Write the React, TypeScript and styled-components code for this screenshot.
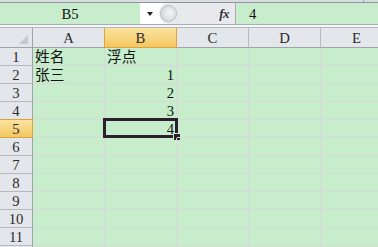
import styled, { createGlobalStyle } from 'styled-components';

const GlobalStyle = createGlobalStyle`
  html, body {
    margin: 0;
    padding: 0;
    overflow: hidden;
    background: #f2f3f5;
  }
`;

const COLUMNS = ['A', 'B', 'C', 'D', 'E'];
const ROW_COUNT = 12;

const data: Record<string, { value: string; align?: 'left' | 'right' }> = {
  A1: { value: '姓名' },
  B1: { value: '浮点' },
  A2: { value: '张三' },
  B2: { value: '1', align: 'right' },
  B3: { value: '2', align: 'right' },
  B4: { value: '3', align: 'right' },
  B5: { value: '4', align: 'right' },
};

const activeCol = 'B';
const activeRow = 5;

const App = () => {
  const rows = Array.from({ length: ROW_COUNT }, (_, i) => i + 1);

  return (
    <Window>
      <GlobalStyle />
      <TopStrip>
        <StripDivider />
      </TopStrip>
      <FormulaBar>
        <NameBox>B5</NameBox>
        <DropButton>
          <Arrow />
        </DropButton>
        <FxPanel>
          <Knob />
          <FxLabel>fx</FxLabel>
        </FxPanel>
        <FormulaInput>4</FormulaInput>
      </FormulaBar>
      <Gap />
      <Sheet>
        <Corner>
          <CornerMark />
        </Corner>
        {COLUMNS.map((col) => (
          <ColHeader key={col} $active={col === activeCol}>
            {col}
          </ColHeader>
        ))}
        {rows.map((row) => (
          <Row key={row} row={row} />
        ))}
      </Sheet>
    </Window>
  );
};

// last row only peeks in at the bottom edge, so its label is left out
const Row = ({ row }: { row: number }) => (
  <>
    <RowHeader $active={row === activeRow}>{row < ROW_COUNT ? row : ''}</RowHeader>
    {COLUMNS.map((col) => {
      const ref = `${col}${row}`;
      const cell = data[ref];
      const selected = col === activeCol && row === activeRow;
      return (
        <Cell key={ref} $align={cell?.align ?? 'left'}>
          {cell?.value}
          {selected && (
            <Selection>
              <FillHandle />
            </Selection>
          )}
        </Cell>
      );
    })}
  </>
);

const Window = styled.div`
  width: 378px;
  height: 247px;
  overflow: hidden;
  background: #f2f3f5;
  font-family: 'Liberation Serif', 'Noto Sans CJK SC', serif;
  font-size: 14.7px;
  color: #111;
`;

const TopStrip = styled.div`
  height: 2px;
  background: #d9dde2;
  border-bottom: 1px solid #8f959c;
  display: flex;
`;

const StripDivider = styled.div`
  margin-left: 363px;
  width: 1px;
  background: #9aa0a6;
`;

const FormulaBar = styled.div`
  display: flex;
  height: 21px;
  border-bottom: 1px solid #a8adb3;
`;

const NameBox = styled.div`
  width: 140px;
  background: #c7edcc;
  display: flex;
  align-items: center;
  justify-content: center;
  padding-top: 1px;
`;

const DropButton = styled.div`
  width: 19px;
  background: #fff;
  display: flex;
  align-items: center;
  justify-content: center;
  padding-right: 4px;
`;

const Arrow = styled.div`
  width: 0;
  height: 0;
  border-left: 3.5px solid transparent;
  border-right: 3.5px solid transparent;
  border-top: 4px solid #222;
  margin-top: 1px;
`;

const FxPanel = styled.div`
  width: 76px;
  margin-left: -4px;
  display: flex;
  align-items: center;
  background: #e7e9ec;
  border-right: 1px solid #a9adb3;
  border-radius: 11px 0 0 11px;
`;

const Knob = styled.div`
  width: 17px;
  height: 17px;
  margin-left: 1px;
  border-radius: 50%;
  box-sizing: border-box;
  border: 1px solid #b9bdc3;
  background: radial-gradient(circle at 60% 45%, #f4f5f7 0%, #d9dce0 60%, #c9cdd2 100%);
`;

const FxLabel = styled.div`
  margin-left: auto;
  margin-right: 6px;
  font-family: 'Liberation Serif', serif;
  font-style: italic;
  font-weight: bold;
  font-size: 13px;
  color: #333;
  letter-spacing: -0.5px;
`;

const FormulaInput = styled.div`
  flex: 1;
  background: #c7edcc;
  display: flex;
  align-items: center;
  padding-left: 13px;
  padding-top: 1px;
`;

const Gap = styled.div`
  height: 2px;
  background: #f4f5f7;
`;

const Sheet = styled.div`
  display: grid;
  grid-template-columns: 33px repeat(5, 72px);
  grid-template-rows: 20px;
  grid-auto-rows: 18px;
  border-top: 1px solid #b4b8bd;
  background: #c7edcc;
`;

const HeaderBase = styled.div`
  box-sizing: border-box;
  background: #e3e6ea;
  color: #2b2b2b;
  display: flex;
  align-items: center;
  justify-content: center;
`;

const Corner = styled(HeaderBase)`
  position: relative;
  border-right: 1px solid #9fa4aa;
  border-bottom: 1px solid #9fa4aa;
`;

const CornerMark = styled.div`
  position: absolute;
  right: 4px;
  bottom: 3px;
  width: 0;
  height: 0;
  border-left: 9px solid transparent;
  border-bottom: 9px solid #c5c9ce;
`;

const ColHeader = styled(HeaderBase)<{ $active: boolean }>`
  padding-top: 1px;
  border-right: 1px solid ${(p) => (p.$active ? '#e0a33c' : '#b6babf')};
  border-bottom: 1px solid ${(p) => (p.$active ? '#e0a33c' : '#9fa4aa')};
  ${(p) =>
    p.$active &&
    `
    background: linear-gradient(#fae39f, #f4c761);
    box-shadow: -1px 0 0 #e0a33c;
  `}
`;

const RowHeader = styled(HeaderBase)<{ $active: boolean }>`
  padding-top: 1px;
  border-right: 1px solid ${(p) => (p.$active ? '#e0a33c' : '#9fa4aa')};
  border-bottom: 1px solid ${(p) => (p.$active ? '#e0a33c' : '#b6babf')};
  ${(p) =>
    p.$active &&
    `
    background: linear-gradient(#fae39f, #f4c761);
    box-shadow: 0 -1px 0 #e0a33c;
  `}
`;

const Cell = styled.div<{ $align: 'left' | 'right' }>`
  position: relative;
  box-sizing: border-box;
  border-right: 1px solid #d6d9d6;
  border-bottom: 1px solid #d6d9d6;
  display: flex;
  align-items: flex-end;
  justify-content: ${(p) => (p.$align === 'right' ? 'flex-end' : 'flex-start')};
  padding: 0 2px 0 2px;
  line-height: 16px;
  white-space: nowrap;
`;

const Selection = styled.div`
  position: absolute;
  left: -2px;
  top: -2px;
  width: 75px;
  height: 20px;
  box-sizing: border-box;
  border: 3px solid #2d1e2d;
  pointer-events: none;
`;

const FillHandle = styled.div`
  position: absolute;
  right: -5px;
  bottom: -5px;
  width: 6px;
  height: 6px;
  background: #2d1e2d;
  box-shadow: 0 0 0 1px #c7edcc;
`;

export default App;
